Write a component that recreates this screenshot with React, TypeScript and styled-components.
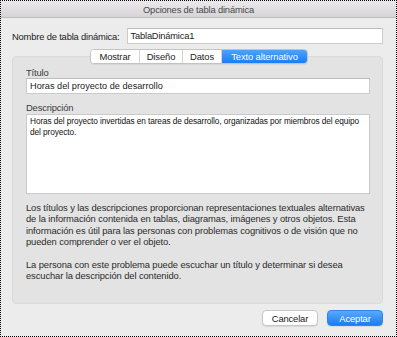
import React from "react";
import styled, { createGlobalStyle } from "styled-components";

const Global = createGlobalStyle`
  html, body { margin: 0; padding: 0; }
  body { background: #ececec; font-family: "Liberation Sans", Arial, sans-serif; color: #262626; }
  * { box-sizing: border-box; }
`;

const Window = styled.div`
  width: 397px;
  height: 337px;
  border: 1px dotted #000;
  background: #ececec;
  display: flex;
  flex-direction: column;
`;

const TitleBar = styled.div`
  height: 17px;
  flex: none;
  background: linear-gradient(#ebe9eb, #d6d4d6);
  border-bottom: 1px solid #bdbbbd;
  display: flex;
  align-items: center;
  justify-content: center;
  font-size: 9.4px;
  letter-spacing: -0.18px;
  color: #4a4a4a;
`;

const Body = styled.div`
  flex: 1;
  display: flex;
  flex-direction: column;
  padding: 10px 13px 0 11px;
`;

const NameRow = styled.div`
  display: flex;
  align-items: center;
  gap: 7px;
  font-size: 9.4px;
  letter-spacing: -0.18px;
  height: 16px;
  color: #222;
`;

const TextField = styled.div`
  flex: 1;
  height: 16px;
  background: #fff;
  border: 1px solid #cbcbcb;
  border-top-color: #bcbcbc;
  display: flex;
  align-items: center;
  padding: 0 3px;
  font-size: 9.3px;
  color: #1d1d1d;
`;

const TabsWrap = styled.div`
  margin-top: 5px;
  display: flex;
  flex-direction: column;
  flex: none;
`;

const TabBar = styled.div`
  display: flex;
  align-self: flex-start;
  margin-left: 78px;
  height: 15px;
  border: 1px solid #c3c3c3;
  border-radius: 4px;
  background: #fff;
  overflow: hidden;
  position: relative;
  z-index: 1;
  box-shadow: 0 1px 0 rgba(0, 0, 0, 0.05);
`;

const Tab = styled.div<{ $active?: boolean; $w: number }>`
  width: ${(p) => p.$w}px;
  display: flex;
  align-items: center;
  justify-content: center;
  font-size: 9.4px;
  letter-spacing: -0.1px;
  color: ${(p) => (p.$active ? "#fff" : "#1d1d1d")};
  background: ${(p) => (p.$active ? "linear-gradient(#4da3fb, #1b7df6)" : "#fff")};
  & + & { border-left: 1px solid #d4d4d4; }
`;

const Panel = styled.div`
  margin-top: -8px;
  height: 248px;
  background: #e3e3e3;
  border: 1px solid #dadada;
  border-radius: 4px;
  padding: 10px 12px 0 13px;
  display: flex;
  flex-direction: column;
`;

const Label = styled.div<{ $gap?: number }>`
  margin-top: ${(p) => p.$gap ?? 0}px;
  font-size: 9.4px;
  letter-spacing: -0.15px;
  color: #3b3b3b;
  height: 11px;
  line-height: 11px;
`;

const TitleInput = styled(TextField)`
  flex: none;
  height: 16px;
  font-size: 9.2px;
`;

const TextArea = styled.div`
  margin-top: 1px;
  height: 80px;
  background: #fff;
  border: 1px solid #cacaca;
  padding: 1px 2px 0 3px;
  font-size: 8.3px;
  letter-spacing: -0.1px;
  line-height: 10.6px;
  color: #111;
`;

const Para = styled.p<{ $gap: number }>`
  margin: ${(p) => p.$gap}px 0 0;
  font-size: 9.4px;
  letter-spacing: -0.1px;
  line-height: 11.4px;
  color: #2b2b2b;
  white-space: nowrap;
`;

const Footer = styled.div`
  display: flex;
  justify-content: flex-end;
  gap: 9px;
  margin-top: 6px;
`;

const Button = styled.div<{ $primary?: boolean }>`
  width: 56px;
  height: 16px;
  border-radius: 4px;
  display: flex;
  align-items: center;
  justify-content: center;
  font-size: 9.4px;
  letter-spacing: -0.15px;
  color: ${(p) => (p.$primary ? "#fff" : "#222")};
  background: ${(p) => (p.$primary ? "linear-gradient(#5aa9fb, #1c7cf4)" : "#fff")};
  border: 1px solid ${(p) => (p.$primary ? "#2f86f2" : "#c6c6c6")};
  box-shadow: 0 1px 1px rgba(0, 0, 0, 0.08);
`;

export default function App() {
  return (
    <>
      <Global />
      <Window>
        <TitleBar>Opciones de tabla dinámica</TitleBar>
        <Body>
          <NameRow>
            <span>Nombre de tabla dinámica:</span>
            <TextField>TablaDinámica1</TextField>
          </NameRow>
          <TabsWrap>
            <TabBar>
              <Tab $w={48}>Mostrar</Tab>
              <Tab $w={43}>Diseño</Tab>
              <Tab $w={39}>Datos</Tab>
              <Tab $w={86} $active>Texto alternativo</Tab>
            </TabBar>
            <Panel>
              <Label>Título</Label>
              <TitleInput>Horas del proyecto de desarrollo</TitleInput>
              <Label $gap={8}>Descripción</Label>
              <TextArea>
                Horas del proyecto invertidas en tareas de desarrollo, organizadas por miembros del equipo del proyecto.
              </TextArea>
              <Para $gap={8}>
                Los títulos y las descripciones proporcionan representaciones textuales alternativas
                <br />
                de la información contenida en tablas, diagramas, imágenes y otros objetos. Esta
                <br />
                información es útil para las personas con problemas cognitivos o de visión que no
                <br />
                pueden comprender o ver el objeto.
              </Para>
              <Para $gap={11}>
                La persona con este problema puede escuchar un título y determinar si desea
                <br />
                escuchar la descripción del contenido.
              </Para>
            </Panel>
          </TabsWrap>
          <Footer>
            <Button>Cancelar</Button>
            <Button $primary>Aceptar</Button>
          </Footer>
        </Body>
      </Window>
    </>
  );
}
